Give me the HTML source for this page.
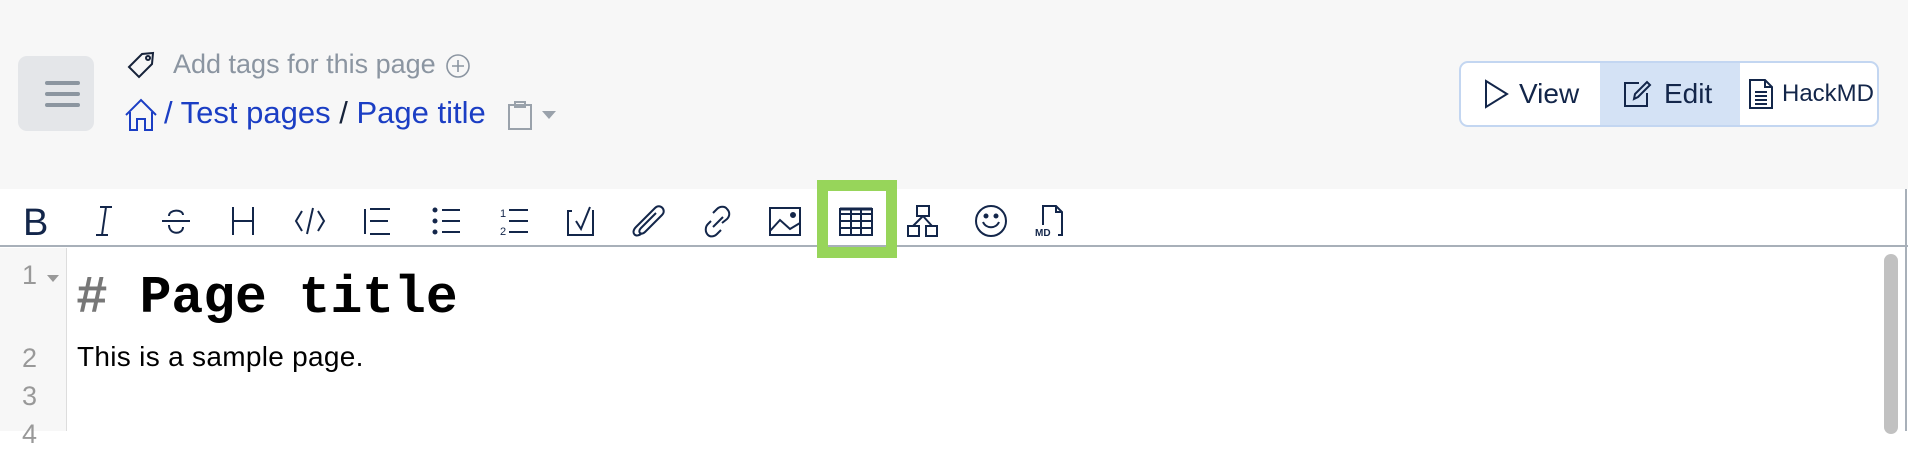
<!DOCTYPE html>
<html><head><meta charset="utf-8"><style>
*{margin:0;padding:0;box-sizing:border-box}
body{width:1908px;height:431px;overflow:hidden;background:#fff;font-family:"Liberation Sans",sans-serif;position:relative}
.hdr{position:absolute;left:0;top:0;width:1908px;height:189px;background:#f7f7f7}
.ham{position:absolute;left:18px;top:56px;width:76px;height:75px;background:#e4e6e9;border-radius:9px}
.ham i{position:absolute;left:27px;width:35px;height:4px;background:#8c96a0;border-radius:2px}
.tags{position:absolute;left:173px;top:49px;font-size:27px;color:#8b95a1}
.bc{position:absolute;left:164px;top:95px;font-size:31px;color:#1b3ec4}
.bc .s{color:#17233a}
.grp{position:absolute;left:1459px;top:61px;width:420px;height:66px;border:2px solid #c3d6f1;border-radius:9px;background:#fff;overflow:hidden}
.grp div{position:absolute;top:0;height:62px;font-size:28px;color:#13264a;display:flex;align-items:center}
.tb{position:absolute;left:0;top:189px;width:1908px;height:58px;background:#fff;border-bottom:2px solid #a8b0b9}
.ic{position:absolute;top:203px}
.green{position:absolute;left:817px;top:180px;width:80px;height:78px;border:11px solid #97d55a}
.gut{position:absolute;left:0;top:248px;width:67px;height:183px;background:#f7f7f7;border-right:1px solid #ddd}
.ln{position:absolute;font-size:27px;color:#999;left:22px}
.sb{position:absolute;left:1884px;top:254px;width:14px;height:180px;background:#c1c1c1;border-radius:7px}
.rb{position:absolute;left:1905px;top:189px;width:2px;height:242px;background:#a8b0b9}
</style></head><body>
<div class="hdr"></div>
<div class="ham"><i style="top:25px"></i><i style="top:36px"></i><i style="top:47px"></i></div>
<svg style="position:absolute;left:127px;top:51px" width="30" height="28" viewBox="0 0 30 28" fill="none" stroke="#17233a" stroke-width="2"><path d="M2 16 L15 3 L26 2 L25 13 L12 26 Z"/><circle cx="21" cy="7" r="2"/></svg>
<div class="tags">Add tags for this page</div>
<svg style="position:absolute;left:445px;top:53px" width="26" height="26" viewBox="0 0 26 26" fill="none" stroke="#8b95a1" stroke-width="1.6"><circle cx="13" cy="13" r="11"/><path d="M13 7v12M7 13h12"/></svg>
<svg style="position:absolute;left:124px;top:98px" width="34" height="34" viewBox="0 0 34 34" fill="none" stroke="#1b3ec4" stroke-width="2"><path d="M2 17 L17 2 L32 17 M6 14 V32 H13 V21 H21 V32 H28 V14"/></svg>
<div class="bc">/ Test pages <span class="s">/</span> Page title</div>
<svg style="position:absolute;left:506px;top:100px" width="30" height="30" viewBox="0 0 30 30" fill="none" stroke="#9aa2ab" stroke-width="2"><rect x="3" y="5" width="22" height="24"/><rect x="9" y="2" width="10" height="5"/></svg>
<svg style="position:absolute;left:541px;top:110px" width="16" height="10"><path d="M1 1h14L8 9z" fill="#9aa2ab"/></svg>
<div class="grp">
<div style="left:0;width:139px;padding-left:22px"><svg width="26" height="30" viewBox="0 0 26 30" fill="none" stroke="#13264a" stroke-width="2"><path d="M3 2 L24 15 L3 28 Z"/></svg><span style="margin-left:10px">View</span></div>
<div style="left:139px;width:140px;background:#d4e2f5;padding-left:22px"><svg width="30" height="30" viewBox="0 0 30 30" fill="none" stroke="#13264a" stroke-width="2"><path d="M17 4H3V27H25V14"/><path d="M12 20 L13 15 L25 3 L28 6 L16 18 Z"/></svg><span style="margin-left:12px">Edit</span></div>
<div style="left:279px;width:141px;padding-left:8px;font-size:24px"><svg width="26" height="32" viewBox="0 0 26 32" fill="none" stroke="#13264a" stroke-width="2"><path d="M2 2H17L24 9V30H2Z M17 2V9H24 M7 14H19M7 18H19M7 22H19M7 26H19"/></svg><span style="margin-left:8px">HackMD</span></div>
</div>
<div class="tb"></div>
<div class="green"></div>
<svg class="ic" style="left:0" width="1100" height="36" viewBox="0 0 1100 36" fill="none" stroke="#13264a" stroke-width="2">
<text x="23" y="32" font-family="Liberation Sans" font-size="38" fill="#13264a" stroke="none">B</text>
<path d="M100 4H112M96 32H108M106 4L102 32"/>
<path d="M162 18H190M169 13C169 6 183 6 183 12M169 22C169 32 183 32 183 24"/>
<path d="M233 4V32M253 4V32M233 18H253"/>
<path d="M302 8L296 18L302 28M318 8L324 18L318 28M313 5L307 31"/>
<path d="M365 6V31M370 6H390M370 18H388M370 31H390"/>
<circle cx="435" cy="7" r="1.5" fill="#13264a"/><circle cx="435" cy="18" r="1.5" fill="#13264a"/><circle cx="435" cy="29" r="1.5" fill="#13264a"/><path d="M442 7H460M442 18H460M442 29H460"/>
<text x="500" y="14" font-size="11" fill="#13264a" stroke="none" font-family="Liberation Sans">1</text><text x="500" y="32" font-size="11" fill="#13264a" stroke="none" font-family="Liberation Sans">2</text><path d="M509 7H528M509 18H528M509 29H528"/>
<path d="M572 8H568V32H593V8H592M576 18L581 26L590 4"/>
<path d="M642 30C636 36 630 30 636 24L655 5C660 0 667 7 662 12L645 29C641 33 637 29 641 25L656 10"/>
<path d="M713 10L717 6C720 3 725 3 727 6C730 9 730 13 727 16L722 20M711 18L708 21C705 24 705 29 708 32C710 34 714 34 717 31L721 27M713 24L723 14"/>
<rect x="770" y="5" width="30" height="27"/><path d="M770 28L780 17L790 26L800 20"/><circle cx="793" cy="12" r="2" fill="#13264a"/>
<rect x="840" y="6" width="32" height="26"/><path d="M840 11H872M840 18H872M840 25H872M851 6V32M861 6V32" />
<path d="M840 6H872" stroke-width="3"/>
<rect x="917" y="3" width="12" height="10"/><rect x="908" y="23" width="11" height="10"/><rect x="926" y="23" width="11" height="10"/><path d="M923 13L913 23M923 13L932 23"/>
<circle cx="991" cy="18" r="15"/><path d="M983 19C986 26 996 26 999 19"/><circle cx="986" cy="13" r="1.5" fill="#13264a"/><circle cx="996" cy="13" r="1.5" fill="#13264a"/>
<path d="M1043 22V3H1056L1062 9V32H1058M1056 3V9H1062"/>
<text x="1035" y="33" font-size="10" font-weight="bold" fill="#13264a" stroke="none" font-family="Liberation Sans">MD</text>
</svg>
<div class="gut"></div>
<div class="ln" style="top:260px">1</div>
<svg style="position:absolute;left:47px;top:275px" width="12" height="8"><path d="M0 0h12L6 7z" fill="#999"/></svg>
<div class="ln" style="top:343px">2</div>
<div class="ln" style="top:381px">3</div>
<div class="ln" style="top:419px">4</div>
<div style="position:absolute;left:76px;top:268px;font-family:'Liberation Mono',monospace;font-weight:bold;font-size:53px;color:#000"><span style="color:#777">#</span> Page title</div>
<div style="position:absolute;left:77px;top:341px;font-size:28px;color:#000;letter-spacing:0.3px">This is a sample page.</div>
<div class="sb"></div>
<div class="rb"></div>
</body></html>
